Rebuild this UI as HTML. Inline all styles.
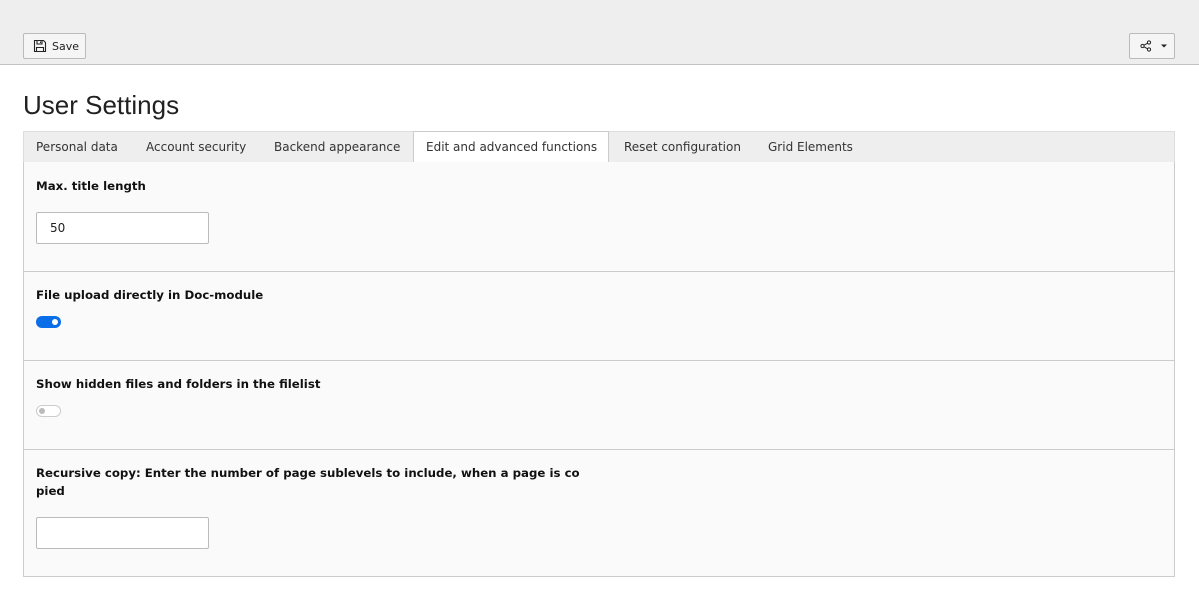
<!DOCTYPE html>
<html><head><style>
*{box-sizing:border-box;margin:0;padding:0}
body{width:1199px;height:593px;background:#fff;font-family:"DejaVu Sans",Verdana,sans-serif;font-size:12px;color:#212121;position:relative;overflow:hidden}
.top{position:absolute;left:0;top:0;width:1199px;height:65px;background:#eee;border-bottom:1px solid #c3c3c3}
.btn{position:absolute;top:33px;height:26px;border:1px solid #bbb;border-radius:2px;background:#f5f5f5;display:flex;align-items:center;font-size:11px}
h1{position:absolute;left:23px;top:90px;font:400 26px "Liberation Sans",sans-serif;color:#212121}
.tabs{position:absolute;left:23px;top:131px;width:1152px;height:32px;background:#eee;border:1px solid #ddd;border-bottom:1px solid #ccc}
.tab{position:absolute;top:0;height:31px;line-height:30px;font-size:12px;color:#333;white-space:nowrap}
.tab.act{background:#fff;border:1px solid #ccc;border-bottom:none;top:-1px;height:32px;line-height:31px;padding:0 12px}
.panel{position:absolute;left:23px;top:162px;width:1152px;height:415px;background:#fafafa;border:1px solid #ccc;border-top:none}
.sec{position:absolute;left:0;width:1150px;border-bottom:1px solid #ccc}
.lbl{position:absolute;left:12px;font-weight:bold;font-size:11.75px;line-height:18px;color:#111}
.inp{position:absolute;left:12px;width:173px;height:32px;background:#fff;border:1px solid #bbb;border-radius:2px;padding-left:13px;line-height:30px;font-size:12px}
.tg{position:absolute;left:12px;width:25px;height:12px;border-radius:6px}
</style></head><body>
<div class="top">
<div class="btn" style="left:23px;width:63px;padding-left:9px">
<svg width="14" height="14" viewBox="0 0 14 14" fill="none" stroke="#222" stroke-width="1.1"><path d="M1.5 1.5h9l2 2v9h-11z"/><path d="M4 1.5v3.5h5V1.5M7.5 2.5v1.5"/><path d="M3.5 12.5v-4h7v4"/></svg>
<span style="margin-left:5px">Save</span></div>
<div class="btn" style="left:1129px;width:46px;padding-left:10px">
<svg width="12" height="12" viewBox="0 0 12 12" fill="none" stroke="#222" stroke-width="1"><circle cx="9" cy="2.5" r="1.6"/><circle cx="9" cy="9.5" r="1.6"/><circle cx="2.5" cy="6" r="1.6"/><path d="M4 5.2l3.6-2M4 6.8l3.6 2"/></svg>
<svg width="8" height="6" style="margin-left:8px" viewBox="0 0 8 6"><path d="M1 1.5h6L4 4.5z" fill="#222"/></svg>
</div>
</div>
<h1>User Settings</h1>
<div class="tabs">
<div class="tab" style="left:12px">Personal data</div>
<div class="tab" style="left:122px">Account security</div>
<div class="tab" style="left:250px">Backend appearance</div>
<div class="tab act" style="left:389px;width:196px">Edit and advanced functions</div>
<div class="tab" style="left:600px">Reset configuration</div>
<div class="tab" style="left:744px">Grid Elements</div>
</div>
<div class="panel">
<div class="sec" style="top:0;height:110px"><div class="lbl" style="top:15px">Max. title length</div><div class="inp" style="top:50px">50</div></div>
<div class="sec" style="top:110px;height:89px"><div class="lbl" style="top:14px">File upload directly in Doc-module</div><div class="tg" style="top:44px;background:#0a6ee8"><div style="position:absolute;right:3px;top:3px;width:6px;height:6px;border-radius:3px;background:#fff"></div></div></div>
<div class="sec" style="top:199px;height:89px"><div class="lbl" style="top:14px">Show hidden files and folders in the filelist</div><div class="tg" style="top:44px;background:#fff;border:1px solid #ccc"><div style="position:absolute;left:2px;top:2px;width:6px;height:6px;border-radius:3px;background:#bbb"></div></div></div>
<div style="position:absolute;top:288px;left:0;width:1150px">
<div class="lbl" style="top:14px;width:580px">Recursive copy: Enter the number of page sublevels to include, when a page is co<br>pied</div>
<div class="inp" style="top:67px"></div></div>
</div>
</body></html>
